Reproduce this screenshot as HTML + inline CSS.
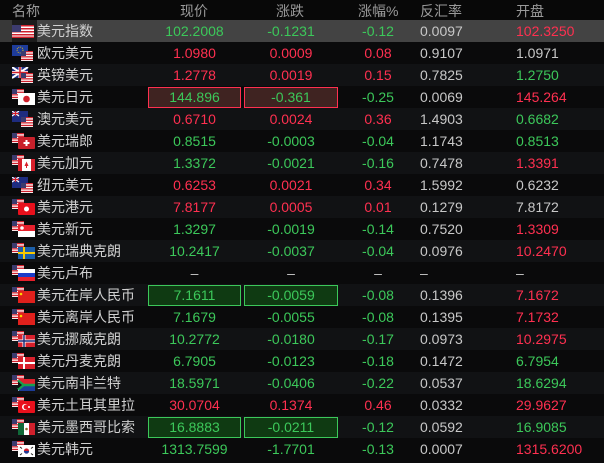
<!DOCTYPE html>
<html><head><meta charset="utf-8"><style>
*{margin:0;padding:0;box-sizing:border-box}
body{width:604px;height:463px;background:#0b0b0c;font-family:"Liberation Sans","Noto Sans CJK SC",sans-serif;font-size:14px;color:#c8c8c8;position:relative;overflow:hidden}
.h{position:absolute;top:0;left:0;width:604px;height:20px;background:#080808;color:#9a9a9a;font-size:14px}
.r{position:absolute;left:0;width:604px;height:22px;line-height:22px}
.c{position:absolute;top:0;white-space:nowrap}
.n{left:37px;color:#d0d0d0}
.p{left:148px;width:93px;text-align:center}
.d{left:244px;width:94px;text-align:center}
.q{left:340px;width:76px;text-align:center}
.v{left:420px}
.o{left:516px}
.g{color:#3cc85a}.e{color:#ff3050}.w{color:#c8c8c8}
.bx{top:1px;height:21px;line-height:19px;border:1px solid}
.br{background:#3f2321;border-color:#ff3050}
.bg{background:#0f3a12;border-color:#3cc85a}
svg.f{position:absolute;left:12px;top:3px}
.sel .lf{position:absolute;left:0;top:0;width:12px;height:22px;background:#383838}
.sel .fl{position:absolute;left:12px;top:0;width:25px;height:22px;background:#1c1c1c}
#rows .r:nth-child(even){background:#0a0a0b}
#rows .r:nth-child(odd){background:#111214}
#rows .r.sel{background:#434343}
</style></head><body>
<svg width="0" height="0" style="position:absolute">
<defs>
<g id="us"><rect width="22" height="13" fill="#fff"/><rect y="0" width="22" height="1.5" fill="#d0202c"/><rect y="3" width="22" height="1.5" fill="#d0202c"/><rect y="6" width="22" height="1.5" fill="#d0202c"/><rect y="9" width="22" height="1.5" fill="#d0202c"/><rect y="11.5" width="22" height="1.5" fill="#d0202c"/><rect width="9" height="7" fill="#3c3b6e"/></g>
<g id="uss"><rect width="12" height="10" fill="#fff"/><rect width="12" height="1.3" fill="#d0202c"/><rect y="2.6" width="12" height="1.3" fill="#d0202c"/><rect y="5.2" width="12" height="1.3" fill="#d0202c"/><rect y="7.8" width="12" height="1.3" fill="#d0202c"/><rect width="5" height="5" fill="#3c3b6e"/></g>
</defs></svg>
<div class="h">
<span class="c" style="left:12px;top:1px">名称</span>
<span class="c" style="left:180px;top:1px">现价</span>
<span class="c" style="left:276px;top:1px">涨跌</span>
<span class="c" style="left:358px;top:1px">涨幅%</span>
<span class="c" style="left:420px;top:1px">反汇率</span>
<span class="c" style="left:516px;top:1px">开盘</span>
</div>
<div id="rows">
<div class="r sel" style="top:20px"><div class="lf"></div><div class="fl"></div><svg class="f" width="24" height="16"><use href="#us" y="2"/></svg><span class="c n">美元指数</span><span class="c p g">102.2008</span><span class="c d g">-0.1231</span><span class="c q g">-0.12</span><span class="c v">0.0097</span><span class="c o e">102.3250</span></div>
<div class="r" style="top:42px"><svg class="f" width="24" height="17"><rect width="16" height="11" fill="#1e3c9a"/><circle cx="8" cy="5" r="3" fill="none" stroke="#ffd200" stroke-width=".8" stroke-dasharray="1 1"/><use href="#uss" x="9" y="6"/></svg><span class="c n">欧元美元</span><span class="c p e">1.0980</span><span class="c d e">0.0009</span><span class="c q e">0.08</span><span class="c v">0.9107</span><span class="c o w">1.0971</span></div>
<div class="r" style="top:64px"><svg class="f" width="24" height="17"><rect width="16" height="11" fill="#1e2c80"/><path d="M0 0L16 11M16 0L0 11" stroke="#fff" stroke-width="2"/><path d="M8 0V11M0 5.5H16" stroke="#fff" stroke-width="3"/><path d="M8 0V11M0 5.5H16" stroke="#d0202c" stroke-width="1.6"/><use href="#uss" x="9" y="6"/></svg><span class="c n">英镑美元</span><span class="c p e">1.2778</span><span class="c d e">0.0019</span><span class="c q e">0.15</span><span class="c v">0.7825</span><span class="c o g">1.2750</span></div>
<div class="r" style="top:86px"><svg class="f" width="24" height="17"><use href="#uss"/><rect x="6" y="4" width="17" height="12" fill="#fff"/><circle cx="14.5" cy="10" r="3.3" fill="#d0202c"/></svg><span class="c n">美元日元</span><span class="c p g bx br">144.896</span><span class="c d g bx br">-0.361</span><span class="c q g">-0.25</span><span class="c v">0.0069</span><span class="c o e">145.264</span></div>
<div class="r" style="top:108px"><svg class="f" width="24" height="17"><rect width="16" height="11" fill="#1e2c80"/><path d="M0 0L7 5M7 0L0 5" stroke="#fff" stroke-width="1.2"/><path d="M3.5 0V5M0 2.5H7" stroke="#d0202c" stroke-width="1.2"/><use href="#uss" x="9" y="6"/></svg><span class="c n">澳元美元</span><span class="c p e">0.6710</span><span class="c d e">0.0024</span><span class="c q e">0.36</span><span class="c v">1.4903</span><span class="c o g">0.6682</span></div>
<div class="r" style="top:130px"><svg class="f" width="24" height="17"><use href="#uss"/><rect x="6" y="4" width="17" height="12" fill="#c8202a" rx="1"/><path d="M14.5 7V13M11.5 10H17.5" stroke="#fff" stroke-width="2"/></svg><span class="c n">美元瑞郎</span><span class="c p g">0.8515</span><span class="c d g">-0.0003</span><span class="c q g">-0.04</span><span class="c v">1.1743</span><span class="c o g">0.8513</span></div>
<div class="r" style="top:152px"><svg class="f" width="24" height="17"><use href="#uss"/><rect x="6" y="4" width="17" height="12" fill="#fff"/><rect x="6" y="4" width="4" height="12" fill="#d8202c"/><rect x="19" y="4" width="4" height="12" fill="#d8202c"/><path d="M14.5 6.5L16.5 11H12.5Z" fill="#d8202c"/><rect x="14" y="11" width="1" height="2" fill="#d8202c"/></svg><span class="c n">美元加元</span><span class="c p g">1.3372</span><span class="c d g">-0.0021</span><span class="c q g">-0.16</span><span class="c v">0.7478</span><span class="c o e">1.3391</span></div>
<div class="r" style="top:174px"><svg class="f" width="24" height="17"><rect width="16" height="11" fill="#1e2c80"/><path d="M0 0L7 5M7 0L0 5" stroke="#fff" stroke-width="1.2"/><path d="M3.5 0V5M0 2.5H7" stroke="#d0202c" stroke-width="1.2"/><use href="#uss" x="9" y="6"/></svg><span class="c n">纽元美元</span><span class="c p e">0.6253</span><span class="c d e">0.0021</span><span class="c q e">0.34</span><span class="c v">1.5992</span><span class="c o w">0.6232</span></div>
<div class="r" style="top:196px"><svg class="f" width="24" height="17"><use href="#uss"/><rect x="6" y="4" width="17" height="12" fill="#e8101c" rx="1"/><circle cx="14.5" cy="10" r="2.5" fill="#fff"/></svg><span class="c n">美元港元</span><span class="c p e">7.8177</span><span class="c d e">0.0005</span><span class="c q e">0.01</span><span class="c v">0.1279</span><span class="c o w">7.8172</span></div>
<div class="r" style="top:218px"><svg class="f" width="24" height="17"><use href="#uss"/><rect x="6" y="4" width="17" height="6" fill="#e8202c"/><rect x="6" y="10" width="17" height="6" fill="#fff"/><circle cx="10" cy="7" r="1.8" fill="#fff"/></svg><span class="c n">美元新元</span><span class="c p g">1.3297</span><span class="c d g">-0.0019</span><span class="c q g">-0.14</span><span class="c v">0.7520</span><span class="c o e">1.3309</span></div>
<div class="r" style="top:240px"><svg class="f" width="24" height="17"><use href="#uss"/><rect x="6" y="4" width="17" height="12" fill="#1c5ea8"/><path d="M12 4V16M6 10H23" stroke="#f8c800" stroke-width="2"/></svg><span class="c n">美元瑞典克朗</span><span class="c p g">10.2417</span><span class="c d g">-0.0037</span><span class="c q g">-0.04</span><span class="c v">0.0976</span><span class="c o e">10.2470</span></div>
<div class="r" style="top:262px"><svg class="f" width="24" height="17"><use href="#uss"/><rect x="6" y="4" width="17" height="4" fill="#fff"/><rect x="6" y="8" width="17" height="4" fill="#1c3cc8"/><rect x="6" y="12" width="17" height="4" fill="#e8202c"/></svg><span class="c n">美元卢布</span><span class="c p w">–</span><span class="c d w">–</span><span class="c q w">–</span><span class="c v">–</span><span class="c o w">–</span></div>
<div class="r" style="top:284px"><svg class="f" width="24" height="17"><use href="#uss"/><rect x="6" y="4" width="17" height="12" fill="#e0201c"/><circle cx="9" cy="7" r="1.3" fill="#ffd800"/></svg><span class="c n">美元在岸人民币</span><span class="c p g bx bg">7.1611</span><span class="c d g bx bg">-0.0059</span><span class="c q g">-0.08</span><span class="c v">0.1396</span><span class="c o e">7.1672</span></div>
<div class="r" style="top:306px"><svg class="f" width="24" height="17"><use href="#uss"/><rect x="6" y="4" width="17" height="12" fill="#e0201c"/><circle cx="9" cy="7" r="1.3" fill="#ffd800"/></svg><span class="c n">美元离岸人民币</span><span class="c p g">7.1679</span><span class="c d g">-0.0055</span><span class="c q g">-0.08</span><span class="c v">0.1395</span><span class="c o e">7.1732</span></div>
<div class="r" style="top:328px"><svg class="f" width="24" height="17"><use href="#uss"/><rect x="6" y="4" width="17" height="12" fill="#d8202c"/><path d="M12 4V16M6 10H23" stroke="#fff" stroke-width="3"/><path d="M12 4V16M6 10H23" stroke="#1c2c78" stroke-width="1.5"/></svg><span class="c n">美元挪威克朗</span><span class="c p g">10.2772</span><span class="c d g">-0.0180</span><span class="c q g">-0.17</span><span class="c v">0.0973</span><span class="c o e">10.2975</span></div>
<div class="r" style="top:350px"><svg class="f" width="24" height="17"><use href="#uss"/><rect x="6" y="4" width="17" height="12" fill="#d8202c"/><path d="M12 4V16M6 10H23" stroke="#fff" stroke-width="2"/></svg><span class="c n">美元丹麦克朗</span><span class="c p g">6.7905</span><span class="c d g">-0.0123</span><span class="c q g">-0.18</span><span class="c v">0.1472</span><span class="c o g">6.7954</span></div>
<div class="r" style="top:372px"><svg class="f" width="24" height="17"><use href="#uss"/><rect x="6" y="4" width="17" height="6" fill="#e0202c"/><rect x="6" y="10" width="17" height="6" fill="#1c3c98"/><path d="M6 4L13 10L6 16" fill="#fff"/><path d="M6 5.5L11.5 10H23" stroke="#18a050" stroke-width="2.5" fill="none"/><path d="M6 14.5L11.5 10" stroke="#18a050" stroke-width="2.5"/><path d="M6 6.5L10 10L6 13.5Z" fill="#111"/></svg><span class="c n">美元南非兰特</span><span class="c p g">18.5971</span><span class="c d g">-0.0406</span><span class="c q g">-0.22</span><span class="c v">0.0537</span><span class="c o g">18.6294</span></div>
<div class="r" style="top:394px"><svg class="f" width="24" height="17"><use href="#uss"/><rect x="6" y="4" width="17" height="12" fill="#e8101c" rx="1"/><circle cx="13" cy="10" r="3" fill="#fff"/><circle cx="14" cy="10" r="2.4" fill="#e8101c"/><circle cx="17" cy="10" r="1" fill="#fff"/></svg><span class="c n">美元土耳其里拉</span><span class="c p e">30.0704</span><span class="c d e">0.1374</span><span class="c q e">0.46</span><span class="c v">0.0332</span><span class="c o e">29.9627</span></div>
<div class="r" style="top:416px"><svg class="f" width="24" height="17"><use href="#uss"/><rect x="6" y="4" width="6" height="12" fill="#106838"/><rect x="12" y="4" width="5" height="12" fill="#fff"/><rect x="17" y="4" width="6" height="12" fill="#d0202c"/><circle cx="14.5" cy="10" r="1.3" fill="#8a6a2a"/></svg><span class="c n">美元墨西哥比索</span><span class="c p g bx bg">16.8883</span><span class="c d g bx bg">-0.0211</span><span class="c q g">-0.12</span><span class="c v">0.0592</span><span class="c o g">16.9085</span></div>
<div class="r" style="top:438px"><svg class="f" width="24" height="17"><use href="#uss"/><rect x="6" y="4" width="17" height="12" fill="#fff"/><circle cx="14.5" cy="10" r="2.6" fill="#d0202c"/><path d="M11.9 10A2.6 2.6 0 0 0 17.1 10Z" fill="#1c3c98"/><path d="M8 6l2 1.5M8 14l2-1.5M21 6l-2 1.5M21 14l-2-1.5" stroke="#222" stroke-width="1"/></svg><span class="c n">美元韩元</span><span class="c p g">1313.7599</span><span class="c d g">-1.7701</span><span class="c q g">-0.13</span><span class="c v">0.0007</span><span class="c o e">1315.6200</span></div>
</div>
</body></html>
